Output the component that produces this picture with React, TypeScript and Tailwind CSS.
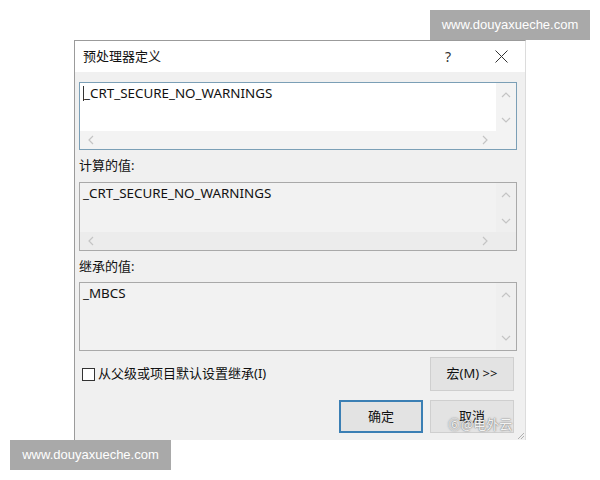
import React from "react";

const latin = "font-['Noto_Sans','Noto_Sans_CJK_SC',sans-serif]";

function UpArrow() {
  return (
    <svg width="10" height="6" viewBox="0 0 10 6" className="block">
      <path d="M1 5 L5 1 L9 5" fill="none" stroke="#c4c4c4" strokeWidth="1.2" />
    </svg>
  );
}
function DownArrow() {
  return (
    <svg width="10" height="6" viewBox="0 0 10 6" className="block">
      <path d="M1 1 L5 5 L9 1" fill="none" stroke="#c4c4c4" strokeWidth="1.2" />
    </svg>
  );
}
function LeftArrow() {
  return (
    <svg width="6" height="10" viewBox="0 0 6 10" className="block">
      <path d="M5 1 L1 5 L5 9" fill="none" stroke="#c4c4c4" strokeWidth="1.2" />
    </svg>
  );
}
function RightArrow() {
  return (
    <svg width="6" height="10" viewBox="0 0 6 10" className="block">
      <path d="M1 1 L5 5 L1 9" fill="none" stroke="#c4c4c4" strokeWidth="1.2" />
    </svg>
  );
}

function VScroll({ bg }: { bg: string }) {
  return (
    <div className={`w-[20px] flex flex-col items-center justify-between pt-[9px] pb-[8px] ${bg}`}>
      <UpArrow />
      <DownArrow />
    </div>
  );
}

export default function App() {
  return (
    <div className={`relative w-[600px] h-[480px] bg-white overflow-hidden ${latin}`}>
      <div className="pl-[74px] pt-[40px]">
        <div className="w-[452px] h-[400px] border-l border-t border-[#9b9b9b] border-r border-r-[#dcdcdc] bg-[#f0f0f0] flex flex-col">
          {/* title bar */}
          <div className="h-[31px] bg-white flex items-center pl-[8px] pr-[17px] text-[13px] text-[#111]">
            <span className="flex-1">预处理器定义</span>
            <span className="w-[10px] text-[14px] text-[#333] mr-[40px]">?</span>
            <svg width="13" height="13" viewBox="0 0 13 13">
              <path d="M0.5 0.5 L12.5 12.5 M12.5 0.5 L0.5 12.5" stroke="#333" strokeWidth="1" />
            </svg>
          </div>

          <div className="pl-[4px] pr-[8px] pt-[10px] flex flex-col">
            {/* box 1 */}
            <div className="h-[68px] border border-[#7b9fb6] flex flex-col bg-[#f3f3f3]">
              <div className="flex flex-1">
                <div className="flex-1 bg-white pl-[3px] pt-[1px] text-[13.4px] text-[#111] leading-[18px] flex items-start">
                  <span className="w-px h-[15px] bg-[#333] mt-[2px]" />
                  <span>_CRT_SECURE_NO_WARNINGS</span>
                </div>
                <VScroll bg="bg-[#f3f3f3]" />
              </div>
              <div className="h-[18px] flex items-center justify-between pl-[8px] pr-[28px]">
                <LeftArrow />
                <RightArrow />
              </div>
            </div>

            <div className="h-[32px] flex items-center text-[13px] text-[#111]">计算的值:</div>

            {/* box 2 */}
            <div className="h-[69px] border border-[#a9a9a9] flex flex-col bg-[#ececec]">
              <div className="flex flex-1">
                <div className="flex-1 bg-[#f2f2f2] pl-[3px] pt-[1px] text-[13.4px] text-[#111] leading-[18px]">
                  _CRT_SECURE_NO_WARNINGS
                </div>
                <VScroll bg="bg-[#efefef]" />
              </div>
              <div className="h-[18px] flex items-center justify-between pl-[8px] pr-[28px]">
                <LeftArrow />
                <RightArrow />
              </div>
            </div>

            <div className="h-[31px] flex items-center text-[13px] text-[#111]">继承的值:</div>

            {/* box 3 */}
            <div className="h-[69px] border border-[#a9a9a9] flex bg-[#ececec]">
              <div className="flex-1 bg-[#f2f2f2] pl-[3px] pt-[1px] text-[13.4px] text-[#111] leading-[18px]">
                _MBCS
              </div>
              <div className="w-[20px] flex flex-col items-center justify-between pt-[9px] pb-[9px] bg-[#efefef]">
                <UpArrow />
                <DownArrow />
              </div>
            </div>

            {/* checkbox row */}
            <div className="mt-[6px] h-[34px] flex items-center justify-between pl-[3px] pr-[3px]">
              <label className="flex items-center gap-[3px] text-[13px] text-[#111]">
                <span className="w-[13px] h-[13px] border border-[#333] bg-white" />
                <span>从父级或项目默认设置继承(I)</span>
              </label>
              <div className="w-[84px] h-[34px] border border-[#cfcfcf] bg-[#e3e3e3] flex items-center justify-center text-[13px] text-[#111]">
                宏(M) &gt;&gt;
              </div>
            </div>

            {/* ok / cancel */}
            <div className="mt-[9px] flex justify-end gap-[7px] pr-[3px]">
              <div className="w-[84px] h-[33px] border-2 border-[#3b7fb4] bg-[#e3e3e3] flex items-center justify-center text-[13px] text-[#111]">
                确定
              </div>
              <div className="relative w-[84px] h-[33px] border border-[#cfcfcf] bg-[#e3e3e3] flex items-center justify-center text-[13px] text-[#111]">
                取消
              </div>
            </div>
          </div>
        </div>
      </div>

      {/* resize grip */}
      <svg className="absolute left-[516px] top-[431px]" width="9" height="9" viewBox="0 0 9 9">
        <path d="M8 2 L2 8 M8 5 L5 8" stroke="#b0b0b0" strokeWidth="1" />
      </svg>

      {/* image watermark over cancel button */}
      <div className="absolute left-[448px] top-[416px] text-[13px] leading-[16px] text-white/90 [text-shadow:0_0_2px_#777,0_0_1px_#777] font-['Noto_Sans_CJK_SC',sans-serif]">
        ⑥@电外云
      </div>

      {/* site watermarks */}
      <div className="absolute left-[430px] top-[10px] w-[160px] h-[30px] bg-[#a9a9a9] flex items-center justify-center text-white text-[13px] font-['Liberation_Sans',sans-serif]">
        www.douyaxueche.com
      </div>
      <div className="absolute left-[10px] top-[440px] w-[161px] h-[30px] bg-[#a9a9a9] flex items-center justify-center text-white text-[13px] font-['Liberation_Sans',sans-serif]">
        www.douyaxueche.com
      </div>
    </div>
  );
}
